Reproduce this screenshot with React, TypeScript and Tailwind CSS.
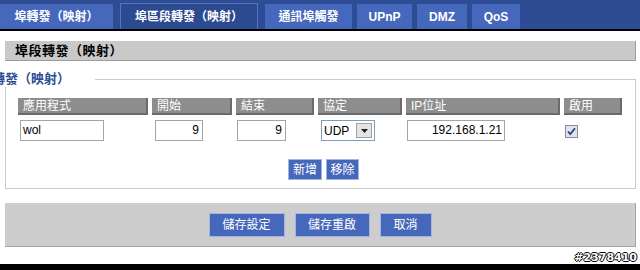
const cjk = "font-['Liberation_Sans','Noto_Sans_CJK_TC',sans-serif]";

function Tab({ label, w, active }: { label: string; w: string; active?: boolean }) {
    return (
        <div
            className={
                active
                    ? `${w} h-[26px] bg-[#2c4a90] border border-b-0 border-[#5674c6] flex items-center justify-center text-white text-[12px] font-bold`
                    : `${w} h-[25px] bg-[#4568bd] flex items-center justify-center text-white text-[12px] font-bold`
            }
        >
            {label}
        </div>
    );
}

function HeadCell({ label }: { label: string }) {
    return (
        <div className="h-[17px] bg-[#8d8d8d] border-r-2 border-b-2 border-[#6a6a6a] text-white text-[12px] leading-[16px] pl-[5px]">
            {label}
        </div>
    );
}

function BlueButton({ label, w, h }: { label: string; w: string; h: string }) {
    return (
        <button className={`${w} ${h} bg-[#4568bb] border border-[#a3b4e2] text-white text-[12px] flex items-center justify-center`}>
            {label}
        </button>
    );
}

export default function App() {
    return (
        <div className={`w-[640px] h-[270px] bg-white overflow-hidden flex flex-col ${cjk}`}>
            {/* top tabs */}
            <div className="h-[31px] bg-[#2d4c94] border-b-2 border-black flex items-end">
                <Tab label="埠轉發（映射）" w="w-[113px]" />
                <div className="ml-[7px]">
                    <Tab label="埠區段轉發（映射）" w="w-[138px]" active />
                </div>
                <div className="ml-[7px]">
                    <Tab label="通訊埠觸發" w="w-[87px]" />
                </div>
                <div className="ml-[5px]">
                    <Tab label="UPnP" w="w-[55px]" />
                </div>
                <div className="ml-[5px]">
                    <Tab label="DMZ" w="w-[50px]" />
                </div>
                <div className="ml-[5px]">
                    <Tab label="QoS" w="w-[48px]" />
                </div>
            </div>

            {/* section title */}
            <div className="mt-[10px] ml-[5px] w-[631px] h-[20px] bg-[#c9c9c9] border-r border-b border-[#9c9c9c] text-[13px] font-bold leading-[19px] pl-[10px] text-black tracking-[0.5px]">
                埠段轉發（映射）
            </div>

            {/* fieldset */}
            <fieldset className="mt-[10px] ml-[5px] w-[631px] border border-[#cccccc] p-0 m-0">
                <legend className="ml-[-40px] pr-[25px] text-[13px] leading-[16px] font-bold text-[#2d4c94]">
                    埠段轉發（映射）
                </legend>
                <div className="pt-[11px] pl-[12px] pb-[8px]">
                    <div className="grid grid-cols-[130px_80px_78px_84px_154px_58px] gap-x-[4px]">
                        <HeadCell label="應用程式" />
                        <HeadCell label="開始" />
                        <HeadCell label="結束" />
                        <HeadCell label="協定" />
                        <HeadCell label="IP位址" />
                        <HeadCell label="啟用" />
                    </div>
                    <div className="mt-[5px] grid grid-cols-[130px_80px_78px_84px_154px_58px] gap-x-[4px] h-[21px] font-['Liberation_Sans',sans-serif] text-[12px] text-black">
                        <div className="pl-[2px]">
                            <div className="w-[84px] h-[21px] border border-[#a5a5a5] pl-[2px] leading-[19px]">wol</div>
                        </div>
                        <div className="pl-[3px]">
                            <div className="w-[48px] h-[21px] border border-[#a5a5a5] pr-[3px] text-right leading-[19px]">9</div>
                        </div>
                        <div className="pl-[1px]">
                            <div className="w-[49px] h-[21px] border border-[#a5a5a5] pr-[3px] text-right leading-[19px]">9</div>
                        </div>
                        <div className="pl-[3px]">
                            <div className="w-[54px] h-[21px] border border-[#7f9db9] flex items-center justify-between pl-[2px] pr-[2px]">
                                <span>UDP</span>
                                <span className="w-[16px] h-[15px] bg-[#e4e4e4] border border-[#a0a0a0] flex items-center justify-center">
                                    <svg width="7" height="4" viewBox="0 0 7 4">
                                        <path d="M0 0h7L3.5 4z" fill="#222" />
                                    </svg>
                                </span>
                            </div>
                        </div>
                        <div className="pl-[1px]">
                            <div className="w-[98px] h-[21px] border border-[#a5a5a5] pr-[2px] text-right leading-[19px]">192.168.1.21</div>
                        </div>
                        <div className="pl-[1px] pt-[5px]">
                            <div className="w-[13px] h-[13px] border border-[#8a8a9a] bg-[#dfe3ee] flex items-center justify-center">
                                <svg width="9" height="9" viewBox="0 0 9 9">
                                    <path d="M1 4.5l2.3 2.6L8 1.2" stroke="#2a3f8a" strokeWidth="1.8" fill="none" />
                                </svg>
                            </div>
                        </div>
                    </div>
                    <div className="mt-[18px] flex justify-center gap-[4px] pr-[6px]">
                        <BlueButton label="新增" w="w-[34px]" h="h-[21px]" />
                        <BlueButton label="移除" w="w-[33px]" h="h-[21px]" />
                    </div>
                </div>
            </fieldset>

            {/* bottom bar */}
            <div className="mt-[14px] ml-[5px] w-[631px] h-[44px] bg-[#cdcdcd] border-r border-b border-[#a3a3a3] flex justify-center items-start pt-[10px] gap-[10px]">
                <BlueButton label="儲存設定" w="w-[76px]" h="h-[24px]" />
                <BlueButton label="儲存重啟" w="w-[75px]" h="h-[24px]" />
                <BlueButton label="取消" w="w-[52px]" h="h-[24px]" />
            </div>

            <div className="h-[17px] flex justify-end items-end pr-[3px]">
                <span className="font-['DejaVu_Sans',sans-serif] font-bold text-[11px] leading-[12px] text-white [text-shadow:1px_0_#000,-1px_0_#000,0_1px_#000,0_-1px_#000]">
                    #2378410
                </span>
            </div>
            <div className="flex-1 bg-black" />
        </div>
    );
}
